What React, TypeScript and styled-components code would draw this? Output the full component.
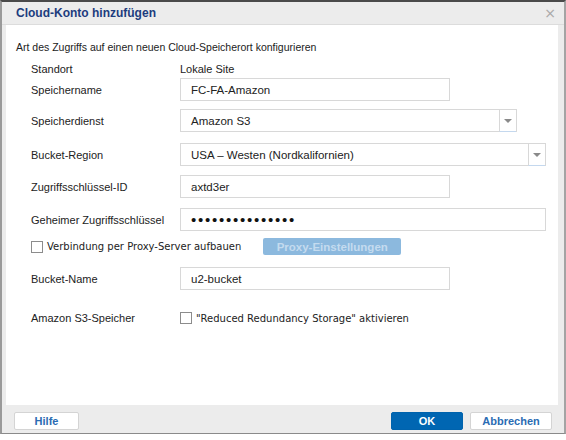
import React from "react";
import styled, { createGlobalStyle } from "styled-components";

const GlobalStyle = createGlobalStyle`
  html, body {
    margin: 0;
    padding: 0;
    background: #ffffff;
  }
  body {
    width: 566px;
    height: 440px;
    overflow: hidden;
    font-family: "Liberation Sans", Arial, sans-serif;
  }
`;

const Page = styled.div`
  width: 566px;
  height: 440px;
  display: flex;
  flex-direction: column;
  background: #ffffff;
`;

const Dialog = styled.div`
  width: 566px;
  height: 434px;
  box-sizing: border-box;
  border-top: 2px solid #4a4a4a;
  border-left: 2px solid #9a9a9a;
  border-right: 2px solid #a4a4a4;
  border-bottom: 1px solid #8a8a8a;
  background: #ececec;
  display: flex;
  flex-direction: column;
`;

const TitleBar = styled.div`
  height: 22px;
  display: flex;
  align-items: center;
  justify-content: space-between;
  padding: 0 8px 0 14px;
  border-bottom: 1px solid #dcdcdc;
`;

const Title = styled.div`
  font-size: 12px;
  font-weight: bold;
  color: #1d3c7e;
`;

const Close = styled.div`
  font-size: 14px;
  color: #a8a8a8;
  font-family: "DejaVu Sans", sans-serif;
  line-height: 1;
`;

const Body = styled.div`
  flex: 1;
  margin: 0 6px 0 4px;
  background: #ffffff;
  padding: 15px 0 0 10px;
  display: flex;
  flex-direction: column;
`;

const Intro = styled.div`
  font-size: 10.5px;
  color: #222222;
  height: 14px;
  line-height: 14px;
`;

const Row = styled.div<{ $top: number; $h?: number }>`
  display: flex;
  align-items: center;
  margin-top: ${(p) => p.$top}px;
  height: ${(p) => p.$h ?? 23}px;
  padding-left: 15px;
`;

const Label = styled.div`
  width: 149px;
  flex: none;
  font-size: 11px;
  color: #222222;
`;

const Static = styled.div`
  font-size: 11px;
  color: #222222;
`;

const Field = styled.div<{ $w: number }>`
  width: ${(p) => p.$w}px;
  height: 23px;
  box-sizing: border-box;
  border: 1px solid #d8d8d8;
  display: flex;
  align-items: center;
  padding-left: 10px;
  font-size: 11.5px;
  color: #222222;
  background: #ffffff;
`;

const Select = styled.div<{ $w: number }>`
  width: ${(p) => p.$w}px;
  height: 23px;
  box-sizing: border-box;
  border: 1px solid #d8d8d8;
  display: flex;
  background: #ffffff;
`;

const SelectValue = styled.div`
  flex: 1;
  display: flex;
  align-items: center;
  padding-left: 10px;
  font-size: 11.5px;
  color: #222222;
`;

const SelectArrow = styled.div`
  width: 16px;
  border-left: 1px solid #d8d8d8;
  border-bottom: 1px solid #c4d8ee;
  margin-bottom: -1px;
  display: flex;
  align-items: center;
  justify-content: center;
  &::after {
    content: "";
    border-left: 4px solid transparent;
    border-right: 4px solid transparent;
    border-top: 4px solid #8a8a8a;
  }
`;

const Dots = styled.span`
  font-size: 15px;
  letter-spacing: 1.75px;
  color: #111111;
  line-height: 1;
`;

const Check = styled.label`
  display: flex;
  align-items: center;
  gap: 4px;
  font-family: "DejaVu Sans", Verdana, sans-serif;
  font-size: 10px;
  color: #222222;
`;

const Box = styled.span`
  width: 10px;
  height: 10px;
  border: 1px solid #8c8c8c;
  background: #ffffff;
  display: inline-block;
`;

const ProxyButton = styled.div`
  margin-left: 22px;
  width: 138px;
  height: 17px;
  border-radius: 2px;
  background: #8cb9de;
  color: #c4dbef;
  font-size: 11.5px;
  font-weight: bold;
  display: flex;
  align-items: center;
  justify-content: center;
`;

const Footer = styled.div`
  height: 28px;
  display: flex;
  align-items: center;
  padding: 3px 12px 0 12px;
  box-sizing: border-box;
  gap: 7px;
`;

const Button = styled.div<{ $w: number; $primary?: boolean }>`
  width: ${(p) => p.$w}px;
  height: 18px;
  box-sizing: border-box;
  border-radius: 2px;
  border: 1px solid ${(p) => (p.$primary ? "#0063ad" : "#d4d4d4")};
  background: ${(p) => (p.$primary ? "#0066b2" : "#ffffff")};
  color: ${(p) => (p.$primary ? "#ffffff" : "#2b6cb3")};
  font-size: 11px;
  font-weight: bold;
  display: flex;
  align-items: center;
  justify-content: center;
`;

const Spacer = styled.div`
  flex: 1;
`;

export default function App() {
  return (
    <Page>
      <GlobalStyle />
      <Dialog>
        <TitleBar>
          <Title>Cloud-Konto hinzufügen</Title>
          <Close>×</Close>
        </TitleBar>
        <Body>
          <Intro>Art des Zugriffs auf einen neuen Cloud-Speicherort konfigurieren</Intro>
          <Row $top={7} $h={16}>
            <Label>Standort</Label>
            <Static>Lokale Site</Static>
          </Row>
          <Row $top={1}>
            <Label>Speichername</Label>
            <Field $w={270}>FC-FA-Amazon</Field>
          </Row>
          <Row $top={8}>
            <Label>Speicherdienst</Label>
            <Select $w={337}>
              <SelectValue>Amazon S3</SelectValue>
              <SelectArrow />
            </Select>
          </Row>
          <Row $top={11}>
            <Label>Bucket-Region</Label>
            <Select $w={366}>
              <SelectValue>USA – Westen (Nordkalifornien)</SelectValue>
              <SelectArrow />
            </Select>
          </Row>
          <Row $top={9}>
            <Label>Zugriffsschlüssel-ID</Label>
            <Field $w={270}>axtd3er</Field>
          </Row>
          <Row $top={10}>
            <Label>Geheimer Zugriffsschlüssel</Label>
            <Field $w={366}>
              <Dots>•••••••••••••••</Dots>
            </Field>
          </Row>
          <Row $top={7} $h={17}>
            <Check>
              <Box />
              Verbindung per Proxy-Server aufbauen
            </Check>
            <ProxyButton>Proxy-Einstellungen</ProxyButton>
          </Row>
          <Row $top={12}>
            <Label>Bucket-Name</Label>
            <Field $w={270}>u2-bucket</Field>
          </Row>
          <Row $top={19} $h={18}>
            <Label>Amazon S3-Speicher</Label>
            <Check>
              <Box />
              "Reduced Redundancy Storage" aktivieren
            </Check>
          </Row>
        </Body>
        <Footer>
          <Button $w={65}>Hilfe</Button>
          <Spacer />
          <Button $w={72} $primary>
            OK
          </Button>
          <Button $w={82}>Abbrechen</Button>
        </Footer>
      </Dialog>
    </Page>
  );
}
